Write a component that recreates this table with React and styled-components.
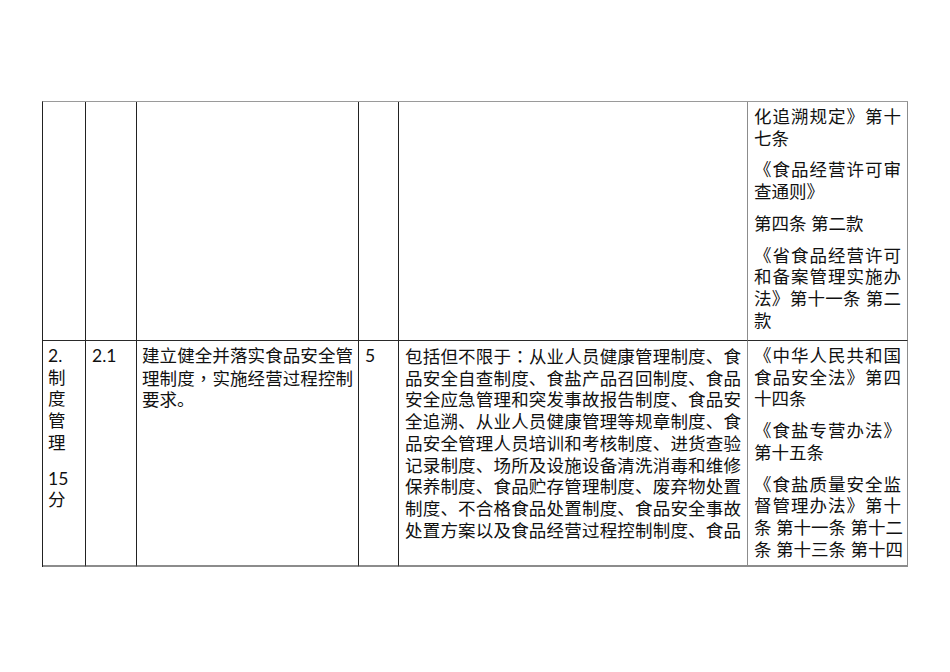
import React from "react";
import styled, { createGlobalStyle } from "styled-components";

const Global = createGlobalStyle`
  html, body { margin: 0; padding: 0; background: #ffffff; }
  body { font-family: "Lato", "Noto Sans CJK SC", sans-serif; color: #111; }
`;

const Page = styled.div`
  width: 950px;
  height: 672px;
  box-sizing: border-box;
  padding: 101px 0 0 42px;
  overflow: hidden;
`;

const Table = styled.div`
  display: grid;
  grid-template-columns: 43px 51px 222px 40px 349px 160px;
  grid-template-rows: 239px 226px;
  width: max-content;
  border-left: 1px solid #222;
  border-top: 1px solid #9a9a9a;
`;

const Cell = styled.div`
  box-sizing: border-box;
  overflow: hidden;
  padding: 4px ${(p) => p.$px ?? 5}px 0;
  border-right: 1px solid ${(p) => p.$edge || "#222"};
  border-bottom: ${(p) => (p.$last ? "2px solid #8c8c8c" : "1px solid #2a2a2a")};
  font-size: 17.5px;
  line-height: 21.7px;
`;

const Para = styled.div`
  margin-top: ${(p) => (p.$first ? 0 : p.$gap)}px;
`;

const Line = styled.div`
  white-space: nowrap;
  text-align: left;
  text-align-last: ${(p) => (p.$fill ? "justify" : "left")};
  text-justify: inter-character;
`;

const Punct = styled.span`
  font-family: "Noto Sans CJK TC", sans-serif;
`;

const renderText = (s) => {
  const parts = s.split(/([：，])/);
  return parts.map((p, i) =>
    p === "：" || p === "，" ? <Punct key={i}>{p}</Punct> : p
  );
};

const Block = ({ paras, gap = 10 }) => (
  <>
    {paras.map((lines, i) => (
      <Para key={i} $first={i === 0} $gap={gap}>
        {lines.map((l, j) => (
          <Line key={j} $fill={j < lines.length - 1 || l.fill}>
            {renderText(typeof l === "string" ? l : l.t)}
          </Line>
        ))}
      </Para>
    ))}
  </>
);

const row1Law = [
  ["化追溯规定》第十", "七条"],
  ["《食品经营许可审", "查通则》"],
  ["第四条 第二款"],
  ["《省食品经营许可", "和备案管理实施办", "法》第十一条 第二", "款"],
];

const row2Law = [
  ["《中华人民共和国", "食品安全法》第四", "十四条"],
  ["《食盐专营办法》", "第十五条"],
  [
    "《食盐质量安全监",
    "督管理办法》第十",
    "条 第十一条 第十二",
    { t: "条 第十三条 第十四", fill: true },
  ],
];

const content = [
  "包括但不限于：从业人员健康管理制度、食",
  "品安全自查制度、食盐产品召回制度、食品",
  "安全应急管理和突发事故报告制度、食品安",
  "全追溯、从业人员健康管理等规章制度、食",
  "品安全管理人员培训和考核制度、进货查验",
  "记录制度、场所及设施设备清洗消毒和维修",
  "保养制度、食品贮存管理制度、废弃物处置",
  "制度、不合格食品处置制度、食品安全事故",
  { t: "处置方案以及食品经营过程控制制度、食品", fill: true },
];

export default function App() {
  return (
    <>
      <Global />
      <Page>
        <Table>
          <Cell />
          <Cell />
          <Cell />
          <Cell />
          <Cell $edge="#8c8c8c" />
          <Cell $edge="#8c8c8c" $px={6}>
            <Block paras={row1Law} />
          </Cell>

          <Cell $last>
            <Block gap={14} paras={[["2.", "制", "度", "管", "理"], ["15", "分"]]} />
          </Cell>
          <Cell $last $px={6}>
            <Block paras={[["2.1"]]} />
          </Cell>
          <Cell $last>
            <Block
              paras={[["建立健全并落实食品安全管", "理制度，实施经营过程控制", "要求。"]]}
            />
          </Cell>
          <Cell $last $px={6}>
            <Block paras={[["5"]]} />
          </Cell>
          <Cell $last $edge="#8c8c8c" $px={6}>
            <Block paras={[content]} />
          </Cell>
          <Cell $last $edge="#8c8c8c" $px={6}>
            <Block paras={row2Law} />
          </Cell>
        </Table>
      </Page>
    </>
  );
}
